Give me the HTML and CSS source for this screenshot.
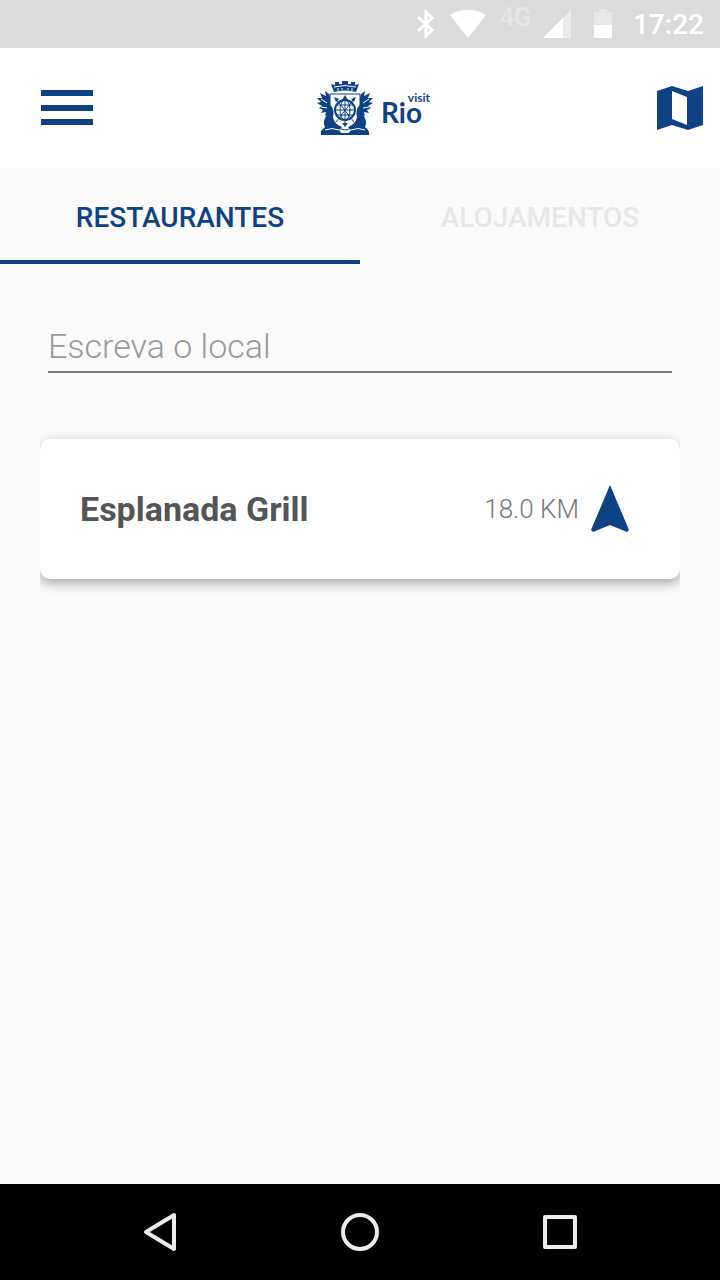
FILE: index.html
```html
<!DOCTYPE html>
<html lang="pt">

<head>
    <meta charset="UTF-8">
    <meta name="viewport" content="width=device-width, initial-scale=1.0">
    <title>Visit Rio</title>
    <link rel="stylesheet" href="styles.css">
</head>

<body>
    <div class="status-bar">
        <svg class="bluetooth" width="20" height="30" viewBox="0 0 20 30" fill="none" stroke="#fff" stroke-width="3">
            <path d="M2 8l14 13-6 6V3l6 6L2 22" />
        </svg>
        <svg class="wifi" width="36" height="30" viewBox="0 0 36 30" fill="#fff">
            <path d="M18 29L0 6C10-1 26-1 36 6z" />
        </svg>
        <span class="network">4G</span>
        <svg class="signal" width="30" height="30" viewBox="0 0 30 30">
            <path fill="#ebebeb" d="M28 1v28H0z" />
            <path fill="#fff" d="M20 9v20H0z" />
        </svg>
        <svg class="battery" width="20" height="30" viewBox="0 0 20 30">
            <path fill="#e7e7e7" d="M6 0h8v3h5v13H1V3h5z" />
            <path fill="#fff" d="M1 16h18v13H1z" />
        </svg>
        <span class="clock">17:22</span>
    </div>

    <header class="toolbar">
        <button class="icon-button" type="button" aria-label="Menu">
            <svg width="54" height="36" viewBox="0 0 54 36" fill="#0f4284">
                <path d="M1 0h52v6H1zM1 15h52v6H1zM1 29h52v6H1z" />
            </svg>
        </button>

        <div class="brand">
            <svg class="crest" width="56" height="54" viewBox="0 0 56 54" fill="#0f4284">
                <!-- crown -->
                <path d="M17 11L14 3l4 1V1h4v2h3V0h6v3h3V1h4v3l4-1-3 8q-11-3-22 0z" />
                <path d="M17 6q11-3 22 0" fill="none" stroke="#fff" />
                <path d="M21 7v3M25 7v2M31 7v2M35 7v3" stroke="#fff" />
                <!-- laurel on both sides -->
                <path d="M12 13l-4-3 1 5-6-3 2 5-5 0 4 4-4 1 5 3-3 2 4 2-2 3 5-1-1 4 5-3V16z" />
                <path d="M44 13l4-3-1 5 6-3-2 5 5 0-4 4 4 1-5 3 3 2-4 2 2 3-5-1 1 4-5-3V16z" />
                <path d="M4 18l6 4M4 26l6 1M52 18l-6 4M52 26l-6 1" stroke="#fff" />
                <!-- shield -->
                <path d="M13 13h30v25q-3 9-15 11-12-2-15-11z" fill="#fff" stroke="#0f4284" />
                <!-- armillary sphere and arrows -->
                <g fill="none" stroke="#0f4284">
                    <circle cx="28" cy="29" r="10" stroke-width="2" />
                    <ellipse cx="28" cy="29" rx="5" ry="10" />
                    <path d="M28 17v27M18 29h20M20 24h16M20 34h16M19 18l18 23M37 18L19 41" />
                </g>
                <path d="M28 14l3 5h-6zM17 16l5 2-3 3zM39 16l-5 2 3 3zM28 46l-3-4h6z" />
                <!-- dolphins -->
                <path d="M12 23c5 4 5 8 4 13 1 5 4 8 9 10l-3 3 3 4H4c-1-3 2-5 4-7-3-6 1-10 3-15z" />
                <path d="M44 23c-5 4-5 8-4 13-1 5-4 8-9 10l3 3-3 4h21c1-3-2-5-4-7 3-6-1-10-3-15z" />
                <path d="M8 49q7-3 14 0M48 49q-7-3-14 0" fill="none" stroke="#fff" />
                <path d="M4 52h48v2H4z" />
            </svg>
            <div class="brand-name">Rio<span class="brand-visit">visit</span></div>
        </div>

        <button class="icon-button" type="button" aria-label="Mapa">
            <svg width="46" height="46" viewBox="0 0 46 46">
                <path fill="#0f4284" fill-rule="evenodd" d="M0 6L15 1l16 5 15-5v39l-15 5-16-5-15 5zM15 6v28l15 6V12z" />
            </svg>
        </button>
    </header>

    <nav class="tabs">
        <button class="tab active" type="button">RESTAURANTES</button>
        <button class="tab" type="button">ALOJAMENTOS</button>
    </nav>

    <main class="content">
        <input class="search" type="text" aria-label="Escreva o local" placeholder="Escreva o local">

        <div class="card-wrap">
            <div class="card">
                <h2 class="place">Esplanada Grill</h2>
                <span class="distance">18.0 KM</span>
                <svg width="38" height="48" viewBox="0 0 38 48" fill="#0f4284">
                    <path d="M19 0l19 45-2 2-17-7-17 7-2-2z" />
                </svg>
            </div>
        </div>
    </main>

    <footer class="nav-bar">
        <button class="nav-button" type="button" aria-label="Voltar">
            <svg width="40" height="40" viewBox="0 0 40 40">
                <path d="M34 3v34L6 20z" />
            </svg>
        </button>
        <button class="nav-button" type="button" aria-label="Início">
            <svg width="40" height="40" viewBox="0 0 40 40">
                <circle cx="20" cy="20" r="17" />
            </svg>
        </button>
        <button class="nav-button" type="button" aria-label="Recentes">
            <svg width="40" height="40" viewBox="0 0 40 40">
                <rect x="5" y="5" width="30" height="30" />
            </svg>
        </button>
    </footer>
</body>

</html>
```
FILE: styles.css
```css
* {
    box-sizing: border-box;
}

body {
    font-family: Roboto, "Liberation Sans", sans-serif;
    margin: 0;
    background-color: #fafafa;
    display: flex;
    flex-direction: column;
    min-height: 100vh;
}

svg {
    display: block;
    flex-shrink: 0;
}

button {
    font-family: inherit;
    padding: 0;
    border: none;
    background: none;
    cursor: pointer;
}

.status-bar {
    display: flex;
    justify-content: flex-end;
    align-items: center;
    height: 48px;
    padding: 0 16px;
    background-color: #dbdbdb;
    color: #fff;
}

.wifi,
.network {
    margin-left: 14px;
}

.network {
    font-size: 25px;
    line-height: 24px;
    font-weight: 500;
    color: #e7e7e7;
    padding-bottom: 12px;
}

.signal {
    margin-left: 12px;
}

.battery {
    margin-left: 20px;
}

.clock {
    margin-left: 20px;
    font-size: 28px;
    font-weight: 500;
}

.toolbar {
    display: flex;
    justify-content: space-between;
    align-items: center;
    height: 120px;
    padding: 0 17px 0 40px;
    background-color: #fff;
}

.brand {
    display: flex;
    align-items: center;
    gap: 8px;
    padding-right: 4px;
}

.brand-name {
    position: relative;
    padding: 8px 8px 0 0;
    font-family: Lato, sans-serif;
    font-size: 28px;
    line-height: 32px;
    font-weight: 700;
    color: #0f4284;
}

.brand-visit {
    position: absolute;
    top: 4px;
    right: 0;
    font-size: 12px;
    line-height: 12px;
}

.tabs {
    display: flex;
    height: 96px;
}

.tab {
    flex: 1;
    padding-top: 2px;
    border-top: 4px solid transparent;
    border-bottom: 4px solid transparent;
    font-size: 28px;
    font-weight: 500;
    color: #e7e7e7;
}

.tab.active {
    color: #0f4284;
    border-bottom-color: #0f4284;
}

.content {
    flex: 1;
    padding: 56px 40px;
}

.search {
    display: block;
    width: calc(100% - 16px);
    height: 53px;
    margin: 0 8px 58px;
    padding: 0;
    border: none;
    border-bottom: 2px solid #7b7b7b;
    background: none;
    font-family: inherit;
    font-size: 34px;
    font-weight: 300;
    color: #555;
    outline: none;
}

.search::placeholder {
    color: #999;
}

/* the shadow is cut off at the sides of the list */
.card-wrap {
    padding: 8px 0 20px;
    overflow: hidden;
}

.card {
    display: flex;
    align-items: center;
    height: 140px;
    padding: 0 51px 0 40px;
    border-radius: 10px;
    background-color: #fff;
    box-shadow: 0 4px 12px rgba(0, 0, 0, 0.35);
}

.place {
    flex: 1;
    margin: 0;
    font-size: 34px;
    font-weight: 700;
    color: #555;
}

.distance {
    margin-right: 12px;
    font-size: 26px;
    font-weight: 300;
    color: #777;
}

.nav-bar {
    display: flex;
    justify-content: center;
    align-items: center;
    gap: 160px;
    height: 96px;
    background-color: #000;
}

.nav-button svg {
    fill: none;
    stroke: #ebebeb;
    stroke-width: 4;
    stroke-linejoin: round;
}
```
